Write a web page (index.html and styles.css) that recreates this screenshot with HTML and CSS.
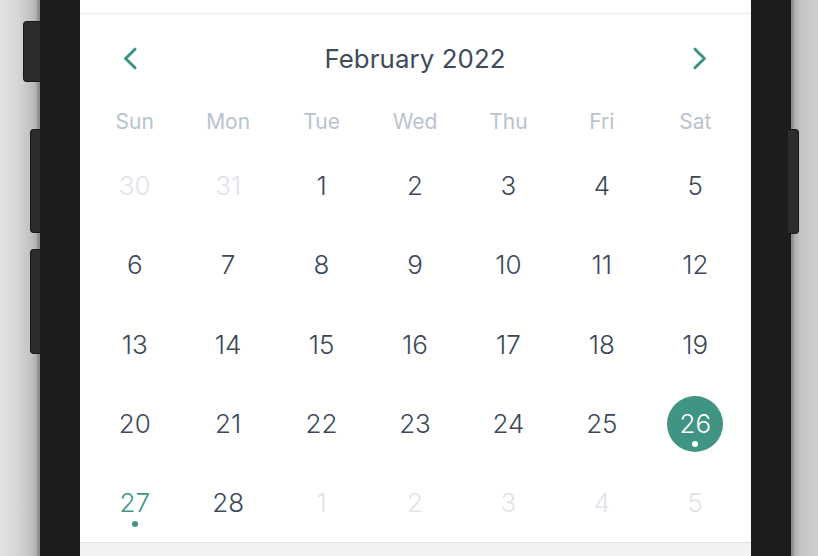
FILE: index.html
```html
<!DOCTYPE html>
<html lang="en">
<head>
<meta charset="utf-8">
<title>Calendar</title>
<link rel="stylesheet" href="styles.css">
</head>
<body>
<div class="stage">
  <div class="gutter gutter-left">
    <div class="hw-btn hw-mute"></div>
    <div class="hw-btn hw-vol-up"></div>
    <div class="hw-btn hw-vol-down"></div>
  </div>
  <div class="phone">
    <div class="screen">
      <div class="top-band"></div>
      <div class="calendar">
        <div class="cal-header">
          <button class="nav" aria-label="Previous month">
            <svg width="14" height="23" viewBox="0 0 14 23"><path d="M12 2.2 L2.6 11.5 L12 20.8" fill="none" stroke="#3d9383" stroke-width="3" stroke-linecap="round" stroke-linejoin="round"/></svg>
          </button>
          <div class="month">February 2022</div>
          <button class="nav" aria-label="Next month">
            <svg width="14" height="23" viewBox="0 0 14 23"><path d="M2 2.2 L11.4 11.5 L2 20.8" fill="none" stroke="#3d9383" stroke-width="3" stroke-linecap="round" stroke-linejoin="round"/></svg>
          </button>
        </div>
        <div class="weekdays">
          <div>Sun</div><div>Mon</div><div>Tue</div><div>Wed</div><div>Thu</div><div>Fri</div><div>Sat</div>
        </div>
        <div class="days">
          <div class="day muted">30</div>
          <div class="day muted">31</div>
          <div class="day">1</div>
          <div class="day">2</div>
          <div class="day">3</div>
          <div class="day">4</div>
          <div class="day">5</div>
          <div class="day">6</div>
          <div class="day">7</div>
          <div class="day">8</div>
          <div class="day">9</div>
          <div class="day">10</div>
          <div class="day">11</div>
          <div class="day">12</div>
          <div class="day">13</div>
          <div class="day">14</div>
          <div class="day">15</div>
          <div class="day">16</div>
          <div class="day">17</div>
          <div class="day">18</div>
          <div class="day">19</div>
          <div class="day">20</div>
          <div class="day">21</div>
          <div class="day">22</div>
          <div class="day">23</div>
          <div class="day">24</div>
          <div class="day">25</div>
          <div class="day"><span class="selected has-dot">26</span></div>
          <div class="day"><span class="today has-dot">27</span></div>
          <div class="day">28</div>
          <div class="day muted">1</div>
          <div class="day muted">2</div>
          <div class="day muted">3</div>
          <div class="day muted">4</div>
          <div class="day muted">5</div>
        </div>
      </div>
      <div class="bottom-band"></div>
    </div>
  </div>
  <div class="gutter gutter-right">
    <div class="hw-btn hw-power"></div>
  </div>
</div>
</body>
</html>
```

FILE: styles.css
```css
* { box-sizing: border-box; }
html, body { margin: 0; padding: 0; }
body {
  width: 818px;
  height: 556px;
  overflow: hidden;
  font-family: "Inter", "Noto Sans", sans-serif;
  background: #cfcfcf;
}
.stage {
  display: flex;
  width: 818px;
  height: 556px;
}
.gutter {
  display: flex;
  flex-direction: column;
  position: relative;
  z-index: 2;
}
.gutter-left {
  width: 40px;
  align-items: flex-end;
  padding-top: 21px;
  background: linear-gradient(to right, #e2e2e2 0, #d6d6d6 18px, #bdbdbd 33px, #a9a9a9 37px, #8c8c8c 38px, #8c8c8c 40px);
}
.gutter-right {
  width: 27px;
  align-items: flex-start;
  padding-top: 129px;
  background: linear-gradient(to right, #8c8c8c 0, #8c8c8c 2px, #ababab 3px, #c4c4c4 10px, #cfcfcf 27px);
}
.hw-btn {
  background: #2c2c2c;
  border: 1px solid #171717;
  border-radius: 4px;
}
.hw-mute { width: 17px; height: 61px; border-right: none; border-radius: 4px 0 0 4px; }
.hw-vol-up { width: 10px; height: 104px; margin-top: 47px; border-right: none; border-radius: 4px 0 0 4px; }
.hw-vol-down { width: 10px; height: 105px; margin-top: 16px; border-right: none; border-radius: 4px 0 0 4px; }
.hw-power { width: 11px; height: 105px; margin-left: -3px; border-left: none; border-radius: 0 4px 4px 0; }

.phone {
  width: 751px;
  height: 556px;
  background: #1c1c1c;
  padding: 0 40px;
}
.screen {
  width: 671px;
  height: 556px;
  background: #fff;
  display: flex;
  flex-direction: column;
}
.top-band {
  height: 14px;
  flex: none;
  border-bottom: 1px solid #ededed;
}
.calendar {
  flex: 1;
  padding: 0 9px 0 8px;
}
.cal-header {
  height: 88px;
  display: flex;
  align-items: center;
  justify-content: space-between;
  padding: 0 35px;
}
.nav {
  border: 0;
  background: none;
  padding: 0;
  width: 14px;
  height: 23px;
  display: flex;
}
.month {
  font-size: 25.8px;
  font-weight: 400;
  color: #3e4b5c;
  letter-spacing: 0.1px;
}
.weekdays {
  display: grid;
  grid-template-columns: repeat(7, 1fr);
  height: 38px;
  align-items: center;
  margin-bottom: 6px;
}
.weekdays div {
  text-align: center;
  font-size: 21px;
  font-weight: 400;
  color: #b9c3cf;
}
.days {
  display: grid;
  grid-template-columns: repeat(7, 1fr);
  grid-auto-rows: 79.3px;
}
.day {
  display: flex;
  align-items: center;
  justify-content: center;
  font-size: 26px;
  font-weight: 300;
  color: #3b4859;
}
.day.muted { color: #dfe3ea; }
.day span {
  position: relative;
  display: flex;
  align-items: center;
  justify-content: center;
  width: 56px;
  height: 56px;
  border-radius: 50%;
}
.selected {
  background: #3f9484;
  color: #fff;
}
.today { color: #3f9484; }
.has-dot::after {
  content: "";
  position: absolute;
  left: 50%;
  top: 45px;
  width: 6px;
  height: 6px;
  margin-left: -3px;
  border-radius: 50%;
  background: #fff;
}
.today.has-dot::after { background: #3f9484; top: 46px; }
.bottom-band {
  height: 15px;
  flex: none;
  background: #f2f2f2;
  border-top: 1px solid #e4e4e4;
}
```
